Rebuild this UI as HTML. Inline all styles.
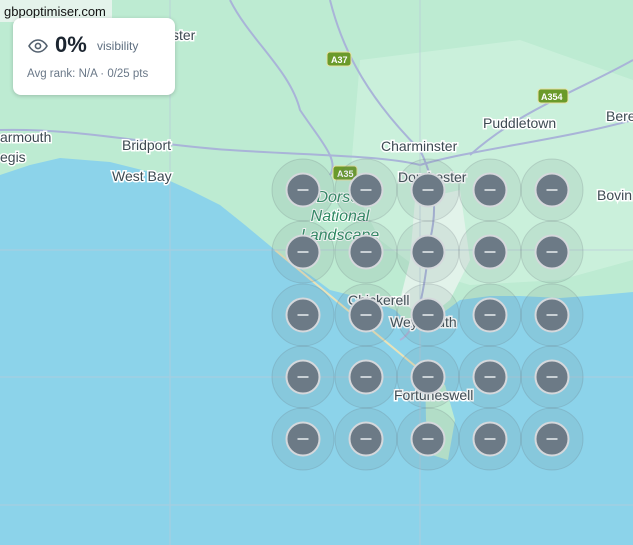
<!DOCTYPE html>
<html><head><style>
body{margin:0;width:633px;height:545px;overflow:hidden;font-family:"Liberation Sans",sans-serif;background:#8cd3ea}
svg{position:absolute;left:0;top:0}
.card{position:absolute;left:13px;top:18px;width:162px;height:77px;background:#fff;border-radius:8px;box-shadow:0 1px 4px rgba(0,0,0,.2)}
</style></head><body>
<svg width="633" height="545" viewBox="0 0 633 545">
<rect width="633" height="545" fill="#8cd3ea"/>
<path d="M0 0H633V292L600 295 560 298 520 296 490 296 460 300 440 315 432 332 420 330 405 320 395 310 370 300 350 295 330 290 310 275 290 262 275 250 245 225 220 205 190 190 150 172 110 162 60 158 30 165 0 175Z" fill="#bdebd2"/>
<path d="M360 60 L520 40 633 80 633 260 560 280 470 285 420 270 380 240 350 180Z" fill="#cdf1dd" opacity=".8"/>
<path d="M415 200 L460 190 470 260 450 300 425 320 400 300 410 260Z" fill="#e2f3ea"/>
<path d="M425 370 L445 385 455 420 448 460 432 455 426 420Z" fill="#bdebd2"/>
<path d="M275 250 L420 370" stroke="#e8e2b8" stroke-width="2"/>
<g stroke="#a9b4d8" stroke-width="2" fill="none">
<path d="M0 130 C80 128 150 145 230 150 C300 155 380 155 420 165 C470 150 560 140 633 120"/>
<path d="M330 0 C340 40 360 90 420 150 C430 170 440 200 430 240 C425 280 420 330 400 340"/>
<path d="M633 60 C580 90 520 110 470 155"/>
<path d="M230 0 C250 40 290 70 300 110 C320 140 340 160 330 175"/>
</g>
<g stroke="#b8c9d8" stroke-width="1" fill="none" opacity=".7">
<path d="M170 0V545M420 0V545M0 250H633M0 377H633M0 505H633"/>
</g>
<g font-size="14" fill="#3d4a52" stroke="#fff" stroke-width="3" paint-order="stroke">
<text x="172" y="40">ster</text>
<text x="0" y="142">armouth</text>
<text x="0" y="162">egis</text>
<text x="122" y="150">Bridport</text>
<text x="112" y="181">West Bay</text>
<text x="381" y="151">Charminster</text>
<text x="483" y="128">Puddletown</text>
<text x="606" y="121">Bere</text>
<text x="398" y="182">Dorchester</text>
<text x="597" y="200">Bovin</text>
<text x="348" y="305">Chickerell</text>
<text x="390" y="327">Weymouth</text>
<text x="394" y="400">Fortuneswell</text>
</g>
<g font-size="16" fill="#2f8a63" font-style="italic" text-anchor="middle" stroke="#fff" stroke-width="2" paint-order="stroke">
<text x="340" y="202">Dorset</text><text x="340" y="221">National</text><text x="340" y="240">Landscape</text>
</g>
<g font-size="9" font-weight="bold">
<rect x="327" y="52" width="24" height="14" rx="3" fill="#6a9a2a" stroke="#e8e0a0"/><text x="331" y="63" fill="#fff">A37</text>
<rect x="333" y="166" width="24" height="14" rx="3" fill="#6a9a2a" stroke="#e8e0a0"/><text x="337" y="177" fill="#fff">A35</text>
<rect x="538" y="89" width="30" height="14" rx="3" fill="#6a9a2a" stroke="#e8e0a0"/><text x="541" y="100" fill="#fff">A354</text>
</g>
</svg>
<svg width="633" height="545" viewBox="0 0 633 545" style="position:absolute;left:0;top:0">
<defs><g id="dot"><circle r="31" fill="rgba(110,130,130,.13)" stroke="rgba(100,110,120,.22)"/><circle r="16.5" fill="#6c7a86" stroke="#d5d8dc" stroke-width="2"/><rect x="-5.5" y="-0.75" width="11" height="1.5" fill="#e8ecef"/></g></defs>
<use href="#dot" x="303" y="190"/><use href="#dot" x="366" y="190"/><use href="#dot" x="428" y="190"/><use href="#dot" x="490" y="190"/><use href="#dot" x="552" y="190"/>
<use href="#dot" x="303" y="252"/><use href="#dot" x="366" y="252"/><use href="#dot" x="428" y="252"/><use href="#dot" x="490" y="252"/><use href="#dot" x="552" y="252"/>
<use href="#dot" x="303" y="315"/><use href="#dot" x="366" y="315"/><use href="#dot" x="428" y="315"/><use href="#dot" x="490" y="315"/><use href="#dot" x="552" y="315"/>
<use href="#dot" x="303" y="377"/><use href="#dot" x="366" y="377"/><use href="#dot" x="428" y="377"/><use href="#dot" x="490" y="377"/><use href="#dot" x="552" y="377"/>
<use href="#dot" x="303" y="439"/><use href="#dot" x="366" y="439"/><use href="#dot" x="428" y="439"/><use href="#dot" x="490" y="439"/><use href="#dot" x="552" y="439"/>
</svg>
<div style="position:absolute;left:0;top:0;width:108px;background:rgba(235,245,240,.85);font-size:13px;color:#111;padding-left:4px;line-height:24px;height:22px">gbpoptimiser.com</div>
<div class="card">
<svg width="20" height="14" viewBox="0 0 20 14" style="left:15px;top:21px"><path d="M1 7C4 2 8 1 10 1S16 2 19 7C16 12 12 13 10 13S4 12 1 7Z" fill="none" stroke="#556270" stroke-width="1.6"/><circle cx="10" cy="7" r="2.6" fill="none" stroke="#556270" stroke-width="1.6"/></svg>
<div style="position:absolute;left:42px;top:14px;font-size:22px;font-weight:bold;color:#1c2530">0%</div>
<div style="position:absolute;left:84px;top:21px;font-size:12px;color:#5f6f80">visibility</div>
<div style="position:absolute;left:14px;top:50px;font-size:11.5px;color:#6a7888">Avg rank: N/A · 0/25 pts</div>
</div>
</body></html>
